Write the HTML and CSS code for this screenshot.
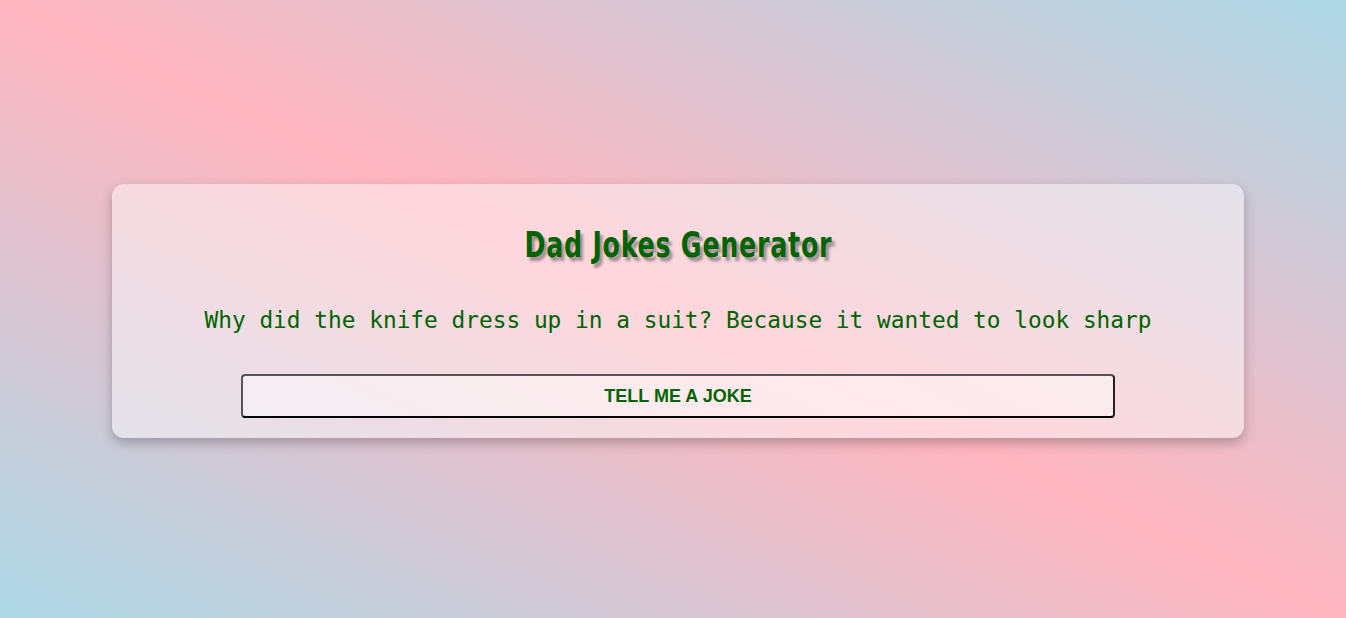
FILE: index.html
```html
<!DOCTYPE html>
<html lang="en">
<head>
<meta charset="utf-8">
<title>Dad Jokes Generator</title>
<link rel="stylesheet" href="styles.css">
</head>
<body>
  <main class="card">
    <h1 class="title"><span class="title-text">Dad Jokes Generator</span></h1>
    <p class="joke">Why did the knife dress up in a suit? Because it wanted to look sharp</p>
    <button class="btn" type="button">TELL ME A JOKE</button>
  </main>
</body>
</html>
```
FILE: styles.css
```css
html, body {
  height: 100%;
}
body {
  margin: 0;
  padding-left: 10px;
  padding-top: 4px;
  box-sizing: border-box;
  min-height: 100vh;
  display: flex;
  align-items: center;
  justify-content: center;
  background: linear-gradient(to top right, #add8e6, #ffb6c1, #add8e6);
  font-family: "Liberation Sans", Arial, sans-serif;
}
.card {
  width: 1132px;
  box-sizing: border-box;
  padding: 20px;
  border-radius: 12px;
  background: rgba(255, 255, 255, 0.45);
  box-shadow: 0 5px 12px rgba(0, 0, 0, 0.25);
  display: flex;
  flex-direction: column;
  align-items: center;
  text-align: center;
}
.title {
  margin: 21px 0 0;
  font-family: "DejaVu Sans", sans-serif;
  font-stretch: condensed;
  font-weight: bold;
  font-size: 36px;
  line-height: 40px;
  color: #006400;
  text-shadow: 4px 4px 3px rgba(0, 0, 0, 0.35);
}
.title-text {
  display: inline-block;
  letter-spacing: 1px;
  transform: scaleX(0.78);
}
.joke {
  margin: 40px 0 0;
  font-family: "DejaVu Sans Mono", monospace;
  font-size: 22.8px;
  line-height: 30px;
  color: #006400;
}
.btn {
  margin-top: 39px;
  width: 80%;
  height: 44px;
  border: 2px solid #555;
  border-bottom-color: #000;
  border-right-color: #222;
  border-radius: 4px;
  background: rgba(255, 255, 255, 0.45);
  color: #006400;
  font-family: "Liberation Sans", Arial, sans-serif;
  font-weight: bold;
  font-size: 18px;
  cursor: pointer;
}
```
